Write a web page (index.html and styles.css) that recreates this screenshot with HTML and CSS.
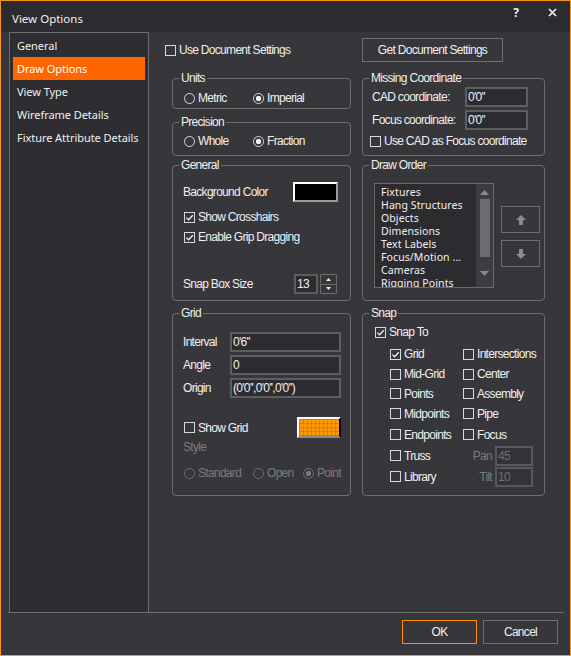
FILE: index.html
```html
<!DOCTYPE html>
<html>
<head>
<meta charset="utf-8">
<title>View Options</title>
<link rel="stylesheet" href="styles.css">
</head>
<body>
<div class="window">
  <div class="titlebar">
    <span class="title">View Options</span>
    <span class="tb-btn help">?</span>
    <span class="tb-btn close"><svg width="9" height="9" viewBox="0 0 9 9"><path d="M1 1 L8 8 M8 1 L1 8" stroke="#f2f2f2" stroke-width="1.7" fill="none"/></svg></span>
  </div>
  <div class="main">
    <div class="nav">
      <div class="nav-item">General</div>
      <div class="nav-item selected">Draw Options</div>
      <div class="nav-item">View Type</div>
      <div class="nav-item">Wireframe Details</div>
      <div class="nav-item">Fixture Attribute Details</div>
    </div>
    <div class="content">
      <div class="toprow">
        <label class="chk doc-chk"><span class="box"></span>Use Document Settings</label>
        <button class="btn get-btn">Get Document Settings</button>
      </div>
      <div class="groups">
        <fieldset class="g-units">
          <legend>Units</legend>
          <div class="gbody units-body">
            <div class="opts">
              <span class="opt w69"><span class="radio"></span>Metric</span>
              <span class="opt"><span class="radio on"></span>Imperial</span>
            </div>
          </div>
        </fieldset>
        <fieldset class="g-missing">
          <legend>Missing Coordinate</legend>
          <div class="gbody missing-body">
            <div class="frow"><span class="lbl w93">CAD coordinate:</span><span class="field w63">0'0''</span></div>
            <div class="frow mt3"><span class="lbl w93">Focus coordinate:</span><span class="field w63">0'0''</span></div>
            <label class="chk mt3 cad-chk"><span class="box"></span>Use CAD as Focus coordinate</label>
          </div>
        </fieldset>
        <fieldset class="g-prec">
          <legend>Precision</legend>
          <div class="gbody prec-body">
            <div class="opts">
              <span class="opt w69"><span class="radio"></span>Whole</span>
              <span class="opt"><span class="radio on"></span>Fraction</span>
            </div>
          </div>
        </fieldset>
        <fieldset class="g-general">
          <legend>General</legend>
          <div class="gbody general-body">
            <div class="frow h20"><span class="lbl w110">Background Color</span><span class="swatch-black"></span></div>
            <label class="chk mt7 ml1"><span class="box"><svg width="9" height="9" viewBox="0 0 9 9"><path d="M1.3 4.6 L3.6 6.8 L7.8 2.2" stroke="#f0f0f0" stroke-width="1.3" fill="none"/></svg></span>Show Crosshairs</label>
            <label class="chk mt4 ml1"><span class="box"><svg width="9" height="9" viewBox="0 0 9 9"><path d="M1.3 4.6 L3.6 6.8 L7.8 2.2" stroke="#f0f0f0" stroke-width="1.3" fill="none"/></svg></span>Enable Grip Dragging</label>
            <div class="frow h20 snapbox">
              <span class="lbl w111">Snap Box Size</span>
              <span class="field spin-field">13</span>
              <span class="spin-btns">
                <span class="spin-half"><svg width="5" height="3" viewBox="0 0 5 3"><path d="M0 3 L2.5 0 L5 3 Z" fill="#f0f0f0"/></svg></span>
                <span class="spin-half"><svg width="5" height="3" viewBox="0 0 5 3"><path d="M0 0 L2.5 3 L5 0 Z" fill="#f0f0f0"/></svg></span>
              </span>
            </div>
          </div>
        </fieldset>
        <fieldset class="g-draw">
          <legend>Draw Order</legend>
          <div class="gbody draw-body">
            <div class="listbox">
              <div class="items">
                <div>Fixtures</div>
                <div>Hang Structures</div>
                <div>Objects</div>
                <div>Dimensions</div>
                <div>Text Labels</div>
                <div>Focus/Motion ...</div>
                <div>Cameras</div>
                <div>Rigging Points</div>
              </div>
              <div class="scroll">
                <svg class="sc-up" width="9" height="5" viewBox="0 0 9 5"><path d="M0 5 L4.5 0 L9 5 Z" fill="#8a8a8a"/></svg>
                <span class="thumb"></span>
                <svg class="sc-down" width="9" height="5" viewBox="0 0 9 5"><path d="M0 0 L4.5 5 L9 0 Z" fill="#8a8a8a"/></svg>
              </div>
            </div>
            <div class="order-btns">
              <span class="obtn"><svg width="10" height="10" viewBox="0 0 10 10"><path d="M5 0 L10 5 L7 5 L7 10 L3 10 L3 5 L0 5 Z" fill="#8c8c8c"/></svg></span>
              <span class="obtn"><svg width="10" height="10" viewBox="0 0 10 10"><path d="M5 10 L10 5 L7 5 L7 0 L3 0 L3 5 L0 5 Z" fill="#8c8c8c"/></svg></span>
            </div>
          </div>
        </fieldset>
        <fieldset class="g-grid">
          <legend>Grid</legend>
          <div class="gbody grid-body">
            <div class="frow"><span class="lbl w47">Interval</span><span class="field w111">0'6''</span></div>
            <div class="frow mt3"><span class="lbl w47">Angle</span><span class="field w111">0</span></div>
            <div class="frow mt3"><span class="lbl w47">Origin</span><span class="field w111">(0'0'',0'0'',0'0'')</span></div>
            <div class="frow showgrid">
              <label class="chk ml1 w113"><span class="box"></span>Show Grid</label>
              <span class="swatch-grid"></span>
            </div>
            <div class="style-lbl">Style</div>
            <div class="opts disabled ml1 style-opts">
              <span class="opt w69"><span class="radio"></span>Standard</span>
              <span class="opt w50"><span class="radio"></span>Open</span>
              <span class="opt"><span class="radio on"></span>Point</span>
            </div>
          </div>
        </fieldset>
        <fieldset class="g-snap">
          <legend>Snap</legend>
          <div class="gbody snap-body">
            <label class="chk"><span class="box"><svg width="9" height="9" viewBox="0 0 9 9"><path d="M1.3 4.6 L3.6 6.8 L7.8 2.2" stroke="#f0f0f0" stroke-width="1.3" fill="none"/></svg></span>Snap To</label>
            <div class="snapgrid">
              <label class="chk"><span class="box"><svg width="9" height="9" viewBox="0 0 9 9"><path d="M1.3 4.6 L3.6 6.8 L7.8 2.2" stroke="#f0f0f0" stroke-width="1.3" fill="none"/></svg></span>Grid</label>
              <label class="chk"><span class="box"></span>Intersections</label>
              <label class="chk"><span class="box"></span>Mid-Grid</label>
              <label class="chk"><span class="box"></span>Center</label>
              <label class="chk"><span class="box"></span>Points</label>
              <label class="chk"><span class="box"></span>Assembly</label>
              <label class="chk"><span class="box"></span>Midpoints</label>
              <label class="chk"><span class="box"></span>Pipe</label>
              <label class="chk"><span class="box"></span>Endpoints</label>
              <label class="chk"><span class="box"></span>Focus</label>
              <label class="chk"><span class="box"></span>Truss</label>
              <div class="pt"><span class="pt-lbl">Pan</span><span class="field dis">45</span></div>
              <label class="chk"><span class="box"></span>Library</label>
              <div class="pt"><span class="pt-lbl">Tilt</span><span class="field dis">10</span></div>
            </div>
          </div>
        </fieldset>
      </div>
    </div>
  </div>
  <div class="sep"></div>
  <div class="footer">
    <button class="btn fbtn ok">OK</button>
    <button class="btn fbtn">Cancel</button>
  </div>
</div>
</body>
</html>
```
FILE: styles.css
```css
* { box-sizing: border-box; }
html, body { margin: 0; padding: 0; background: #37363a; }
body {
  font-family: "Liberation Sans", Arial, sans-serif;
  font-size: 12px;
  color: #f0f0f0;
  letter-spacing: -0.7px;
}
.window {
  width: 571px;
  height: 656px;
  border: 1px solid #f7941d;
  background: #37363a;
  display: flex;
  flex-direction: column;
}
.titlebar {
  height: 31px;
  flex-shrink: 0;
  background: #2c2b2f;
  display: flex;
  align-items: flex-start;
}
.title {
  font-family: "Noto Sans", sans-serif;
  font-size: 11.5px;
  letter-spacing: 0;
  line-height: 16px;
  margin: 10px 0 0 11px;
}
.tb-btn {
  width: 36px;
  height: 22px;
  display: flex;
  align-items: center;
  justify-content: center;
}
.help {
  margin-left: auto;
  font-family: "Noto Sans", sans-serif;
  font-weight: bold;
  font-size: 12px;
  letter-spacing: 0;
}
.main {
  display: flex;
  height: 580px;
  flex-shrink: 0;
}
.nav {
  margin-left: 8px;
  width: 140px;
  border: 1px solid #6b6b6b;
  border-bottom: none;
  background: #2e2d31;
  padding: 1px 3px 0;
}
.nav-item {
  height: 23px;
  line-height: 23px;
  padding-left: 4px;
  font-family: "Noto Sans", sans-serif;
  font-size: 11px;
  letter-spacing: -0.05px;
  white-space: nowrap;
}
.nav-item.selected { background: #ff6600; color: #fff; }
.content {
  flex: 1;
  padding: 6px 0 0 16px;
}
.toprow {
  display: flex;
  align-items: center;
  height: 24px;
}
.doc-chk { width: 197px; }
.btn {
  font-family: "Liberation Sans", Arial, sans-serif;
  font-size: 12px;
  letter-spacing: -0.7px;
  color: #f0f0f0;
  background: #37363a;
  border: 1px solid #707070;
  padding: 0;
  margin: 0;
}
.get-btn { width: 141px; height: 24px; }
.groups {
  display: grid;
  grid-template-columns: 179px 183px;
  column-gap: 11px;
  align-items: start;
  margin: 9px 0 0 7px;
}
fieldset {
  margin: 0;
  padding: 0;
  min-width: 0;
  border: 1px solid #6e6e6e;
  border-radius: 4px;
}
legend {
  margin-left: 6px;
  padding: 0 2px;
  line-height: 14px;
  font-size: 12px;
}
.g-units { grid-column: 1; grid-row: 1; height: 38px; }
.g-missing { grid-column: 2; grid-row: 1 / span 2; height: 85px; }
.g-prec { grid-column: 1; grid-row: 2; height: 41px; margin-top: 6px; }
.g-general { grid-column: 1; grid-row: 3; height: 143px; margin-top: 2px; }
.g-draw { grid-column: 2; grid-row: 3; height: 143px; margin-top: 2px; }
.g-grid { grid-column: 1; grid-row: 4; height: 190px; margin-top: 5px; }
.g-snap { grid-column: 2; grid-row: 4; height: 190px; margin-top: 5px; }

.units-body { padding: 5px 0 0 11px; }
.prec-body { padding: 4px 0 0 11px; }
.missing-body { padding: 2px 0 0 9px; }
.general-body { padding: 10px 0 0 10px; }
.draw-body { padding: 11px 0 0 11px; display: flex; align-items: flex-start; }
.grid-body { padding: 12px 0 0 10px; }
.snap-body { padding: 4px 0 0 12px; }

.opts { display: flex; height: 16px; align-items: center; }
.opt { display: flex; align-items: center; white-space: nowrap; }
.w69 { width: 69px; }
.w50 { width: 50px; }
.radio {
  width: 11px;
  height: 11px;
  border: 1px solid #d8d8d8;
  border-radius: 50%;
  margin-right: 3px;
  flex-shrink: 0;
}
.radio.on { background: radial-gradient(circle, #f0f0f0 0 2.4px, transparent 3px); }
.disabled { color: #7b7b7b; }
.disabled .radio { border-color: #6e6e6e; }
.disabled .radio.on { background: radial-gradient(circle, #7b7b7b 0 2.4px, transparent 3px); }

.chk { display: flex; align-items: center; height: 16px; white-space: nowrap; }
.box {
  width: 11px;
  height: 11px;
  border: 1px solid #d8d8d8;
  margin-right: 3px;
  flex-shrink: 0;
  display: flex;
}
.frow { display: flex; align-items: center; }
.lbl { white-space: nowrap; }
.w93 { width: 93px; }
.w110 { width: 110px; }
.w111 { width: 111px; }
.w47 { width: 47px; }
.w113 { width: 113px; }
.w63 { width: 63px; }
.h20 { height: 20px; }
.mt3 { margin-top: 3px; }
.mt4 { margin-top: 4px; }
.mt7 { margin-top: 7px; }
.ml1 { margin-left: 1px; }
.cad-chk { margin-left: -2px; }

.field {
  display: block;
  height: 20px;
  border: 2px solid #5e5e61;
  background: #2c2b2f;
  padding-left: 1px;
  line-height: 16px;
  white-space: nowrap;
  overflow: hidden;
}
.field.w111 { width: 111px; }
.swatch-black {
  width: 45px;
  height: 20px;
  background: #000;
  border: 2px solid #fff;
  border-right-color: #9a9a9a;
  border-bottom-color: #9a9a9a;
}
.snapbox { margin-top: 29px; }
.spin-field { width: 24px; }
.spin-btns {
  width: 17px;
  height: 20px;
  margin-left: 2px;
  border: 1px solid #6a6a6a;
  display: flex;
  flex-direction: column;
}
.spin-half {
  flex: 1;
  display: flex;
  align-items: center;
  justify-content: center;
}
.spin-half + .spin-half { border-top: 1px solid #6a6a6a; }

.listbox {
  width: 120px;
  height: 105px;
  border: 1px solid #6a6a6a;
  background: #2c2b2f;
  display: flex;
  flex-shrink: 0;
}
.items {
  flex: 1;
  overflow: hidden;
  padding: 2px 0 0 6px;
  font-family: "Noto Sans", sans-serif;
  font-size: 10.5px;
  line-height: 13px;
  letter-spacing: 0.1px;
  white-space: nowrap;
}
.scroll {
  width: 17px;
  background: #3d3c40;
  display: flex;
  flex-direction: column;
  align-items: center;
}
.sc-up { margin-top: 6px; }
.thumb {
  width: 10px;
  height: 58px;
  background: #6c6c6e;
  margin-top: 4px;
}
.sc-down { margin-top: 14px; }
.order-btns {
  margin: 23px 0 0 7px;
  display: flex;
  flex-direction: column;
  gap: 7px;
}
.obtn {
  width: 39px;
  height: 27px;
  border: 1px solid #6e6e6e;
  display: flex;
  align-items: center;
  justify-content: center;
}

.showgrid { margin-top: 19px; height: 21px; }
.swatch-grid {
  width: 44px;
  height: 21px;
  border: 2px solid;
  border-color: #fff #000 #8a8a8a #fff;
  background:
    linear-gradient(90deg, transparent 0 3px, #8a8a8a 3px 4px) 1px 1px / 4px 4px,
    linear-gradient(#ff9900 0 3px, #8a8a8a 3px 4px) 1px 1px / 4px 4px;
  background-color: #8a8a8a;
}
.style-lbl { margin-top: 2px; line-height: 14px; color: #7b7b7b; }
.style-opts { margin-top: 11px; }

.snapgrid {
  display: grid;
  grid-template-columns: 73px auto;
  grid-template-rows: 20px 20px 19px 21px 21px 21px 21px;
  margin: 4px 0 0 15px;
  align-items: center;
}
.pt { display: flex; align-items: center; }
.pt-lbl { width: 29px; text-align: right; margin-right: 3px; color: #7b7b7b; }
.field.dis { width: 38px; border-color: #58585b; color: #6f6f6f; background: #333236; }

.sep { height: 1px; background: #707070; margin: 0 6px 0 7px; flex-shrink: 0; }
.footer {
  display: flex;
  justify-content: flex-end;
  gap: 6px;
  padding: 7px 12px 0 0;
}
.fbtn { width: 75px; height: 24px; }
.fbtn.ok { border-color: #ff8c00; }
```
